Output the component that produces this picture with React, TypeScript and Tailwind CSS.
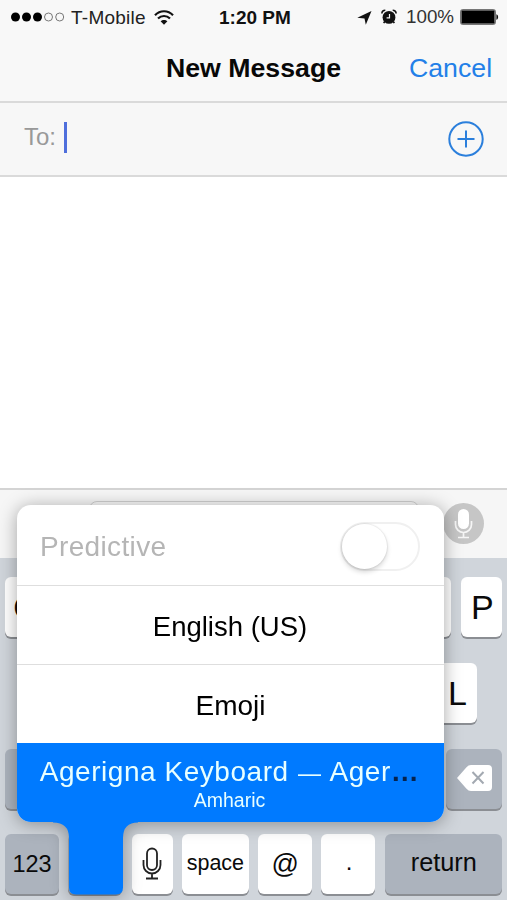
import type { ReactNode } from "react";
import clsx from "clsx";

// keys under the open menu carry no label
const TOP_ROW = ["Q", "", "", "", "", "", "", "", "", "P"];
const HOME_ROW = ["", "", "", "", "", "", "", "", "L"];
const BOTTOM_ROW = ["", "", "", "", "", "", ""];

interface KeyProps {
  children?: ReactNode;
  className?: string;
  dark?: boolean;
}

function Key({ children, className, dark }: KeyProps) {
  return (
    <div
      className={clsx(
        "flex h-[60px] shrink-0 items-center justify-center rounded-[6px] shadow-[0_2px_0_#8b8e93]",
        dark ? "bg-[#acb3bd]" : "bg-white",
        className
      )}
    >
      {children}
    </div>
  );
}

function LetterRow({ letters, className }: { letters: string[]; className?: string }) {
  return (
    <div className={clsx("flex justify-between", className)}>
      {letters.map((letter, i) => (
        <Key key={i} className="w-[41px] pl-[2px] text-[34px]">
          {letter}
        </Key>
      ))}
    </div>
  );
}

function WifiIcon() {
  return (
    <svg width="20" height="15" viewBox="0 0 20 15" fill="none" stroke="#111" strokeWidth="2.2">
      <path d="M1 5.2C6-.1 14-.1 19 5.2" />
      <path d="M4 8.6c3.4-3.5 8.600-3.500 12 0" />
      <path d="M6.600 11.300L10 14.700l3.400-3.400c-1.900-1.900-4.900-1.900-6.800 0z" fill="#111" stroke="none" />
    </svg>
  );
}

function AlarmIcon() {
  return (
    <svg width="16" height="16" viewBox="0 0 16 16" fill="none">
      <path d="M.9 4.600C.9 2.400 2.300 1.200 4.300 1.200M15.100 4.600c0-2.200-1.400-3.400-3.400-3.400" stroke="#111" strokeWidth="1.600" />
      <path d="M3.700 12.500L2.700 14.200M12.300 12.500l1 1.700" stroke="#111" strokeWidth="1.600" />
      <circle cx="8" cy="8.400" r="6.400" fill="#111" />
      <path d="M8.500 5v3.800H5.600" stroke="#f7f7f7" strokeWidth="1.200" />
    </svg>
  );
}

function StatusBar() {
  return (
    <div className="flex h-[34px] items-center text-[19px] leading-none text-[#222]">
      <div className="flex w-[219px] items-center pl-[11px]">
        <svg width="54" height="10" viewBox="0 0 54 10">
          <circle cx="4.500" cy="5" r="4.500" />
          <circle cx="15.500" cy="5" r="4.500" />
          <circle cx="26.500" cy="5" r="4.500" />
          <circle cx="37.500" cy="5" r="4" fill="none" stroke="#777" />
          <circle cx="48.700" cy="5" r="4" fill="none" stroke="#777" />
        </svg>
        <span className="ml-[6px] tracking-[0.25px]">T-Mobile</span>
        <span className="ml-[8px]">
          <WifiIcon />
        </span>
      </div>
      <span className="w-[138px] font-bold text-[#111]">1:20 PM</span>
      <svg width="15" height="14" viewBox="0 0 15 14" className="mt-px">
        <path d="M14.500 0L8.800 13.800 7.500 7.600.3 6.800z" fill="#111" />
      </svg>
      <span className="ml-[9px]">
        <AlarmIcon />
      </span>
      <span className="ml-[9px] w-[53px] text-[18.800px] text-[#333]">100%</span>
      <svg width="39" height="16" viewBox="0 0 39 16" className="ml-[0.5px]">
        <rect x=".8" y=".8" width="34.400" height="14.400" rx="2.500" fill="none" stroke="#777" strokeWidth="1.600" />
        <rect x="1.600" y="1.600" width="32.800" height="12.800" rx="1.200" fill="#000" />
        <path d="M36.400 5.200c2.300.8 2.300 4.800 0 5.600z" fill="#111" />
      </svg>
    </div>
  );
}

function MicOutline() {
  return (
    <svg width="20" height="34" viewBox="0 0 20 34" fill="none" stroke="#222" strokeWidth="1.800">
      <rect x="5" y="1.500" width="10" height="21.500" rx="5" />
      <path d="M1.500 13v5a8.500 8.500 0 0 0 17 0v-5M10 26.500V31.500M4 31.500h12" />
    </svg>
  );
}

function DeleteIcon() {
  return (
    <svg width="35" height="26" viewBox="0 0 35 26" fill="none" className="-mt-[2px]">
      <path d="M0 13L9.500 2.200Q11.400 0 14 0H31q4 0 4 4v18q0 4-4 4H14q-2.600 0-4.500-2.200z" fill="#fff" />
      <path d="M15.500 7l11 11.500M26.500 7l-11 11.500" stroke="#a3a9b1" strokeWidth="2" />
    </svg>
  );
}

function KeyboardMenu() {
  return (
    <div className="absolute top-[505px] left-[17px] w-[427px] drop-shadow-[0_2px_9px_rgba(0,0,0,0.34)]">
      <div className="overflow-hidden rounded-[14px] bg-white text-[28px] leading-none text-black">
        <div className="flex h-[81px] items-center justify-between border-b border-[#dedede] pr-[24px] pl-[23px]">
          <span className="mt-[4px] tracking-[0.35px] text-[#b5b5b5]">Predictive</span>
          <div className="mt-[2px] h-[49px] w-[80px] rounded-full border-2 border-[#f0f0f0]">
            <div className="h-[45px] w-[45px] rounded-full bg-white shadow-[0_3px_5px_rgba(0,0,0,0.16),0_0_1px_1px_rgba(0,0,0,0.06)]" />
          </div>
        </div>
        <div className="flex h-[79px] items-center justify-center border-b border-[#dedede] text-[27.500px]">
          <span className="mt-[3px] -ml-px">English (US)</span>
        </div>
        <div className="flex h-[78px] items-center justify-center">
          <span className="mt-[3px]">Emoji</span>
        </div>
        <div className="flex h-[79px] flex-col items-center bg-[#007aff] pt-[15px] text-[#e8ffff]">
          <span className="-ml-[2px] whitespace-nowrap tracking-[0.550px]">
            Agerigna Keyboard <span className="mx-px text-[23px]">—</span> Ager
            <span className="font-bold text-[#06234d]">…</span>
          </span>
          <span className="mt-[5px] -ml-[2px] text-[19.500px]">Amharic</span>
        </div>
      </div>
      {/* stem that joins the menu to the globe key */}
      <svg width="85" height="74" viewBox="0 0 85 74" className="-mt-px ml-[36px]">
        <path d="M0 0H85V1.500Q70 1.500 70 17V66.500Q70 73.500 63 73.500H23Q16 73.500 16 66.500V17Q16 1.500 0 1.500z" fill="#007aff" />
      </svg>
    </div>
  );
}

export default function App() {
  return (
    <div className="relative flex h-[900px] w-[507px] flex-col overflow-hidden bg-white font-['Liberation_Sans',Arial,sans-serif]">
      <header className="h-[103px] border-b-2 border-[#dadada] bg-[#f8f8f8]">
        <StatusBar />
        <div className="grid h-[67px] grid-cols-[166px_1fr_98px] items-center pt-px text-[26.700px] leading-none">
          <span />
          <h1 className="font-bold text-[#080808]">New Message</h1>
          <span className="text-[#2380e8]">Cancel</span>
        </div>
      </header>

      <div className="flex h-[74px] items-center border-b-2 border-[#dadada] bg-[#f7f7f7] pr-[23px] pb-[3px] pl-[24px]">
        <span className="-mt-[2px] text-[24px] leading-none text-[#999]">To:</span>
        <span className="ml-[8px] h-[31px] w-[3px] bg-[#4f6fdc]" />
        <svg width="36" height="36" viewBox="0 0 36 36" fill="none" stroke="#2b7fdc" strokeWidth="2" className="mt-[2px] ml-auto">
          <circle cx="18" cy="18" r="16.700" />
          <path d="M9.500 18h17M18 9.500v17" />
        </svg>
      </div>

      <div className="flex-1 bg-white" />

      <div className="flex h-[70px] items-start border-t-2 border-[#d4d4d4] bg-[#f6f6f6] pl-[89px]">
        <div className="mt-[11px] h-[46px] w-[330px] rounded-[8px] border-[1.500px] border-[#d0d0d0] bg-[#fafafa]" />
        <svg width="41" height="41" viewBox="0 0 41 41" fill="none" className="mt-[13px] ml-[24px]">
          <circle cx="20.500" cy="20.500" r="20.500" fill="#c6c6c6" />
          <rect x="15" y="6" width="11" height="20" rx="5.500" fill="#fff" />
          <path d="M12.500 18v3.500a8 8 0 0 0 16 0V18M20.500 29.500v4.500M15 34.500h11" stroke="#f6f6f6" strokeWidth="1.700" />
        </svg>
      </div>

      <div className="flex h-[342px] flex-col gap-[26px] bg-[#d0d5db] px-[5px] pt-[19px] text-[#0a0a0a]">
        <LetterRow letters={TOP_ROW} />
        <LetterRow letters={HOME_ROW} className="px-[25px]" />
        <div className="flex justify-between">
          <Key dark className="w-[56px]" />
          <LetterRow letters={BOTTOM_ROW} className="w-[345px]" />
          <Key dark className="w-[56px]">
            <DeleteIcon />
          </Key>
        </div>
        <div className="-mt-px flex gap-[9.300px]">
          <Key dark className="w-[54px] pt-[2px] text-[23.500px]">
            123
          </Key>
          <Key dark className="w-[54px]" />
          <Key className="w-[41px]">
            <MicOutline />
          </Key>
          <Key className="w-[67px] pb-[2px] text-[21.500px]">space</Key>
          <Key className="w-[54px] text-[27px]">@</Key>
          <Key className="w-[54px] pb-[4px] pl-px text-[24px]">.</Key>
          <Key dark className="w-[117px] pb-[2px] pl-px text-[25.300px]">
            return
          </Key>
        </div>
      </div>

      <KeyboardMenu />
    </div>
  );
}
